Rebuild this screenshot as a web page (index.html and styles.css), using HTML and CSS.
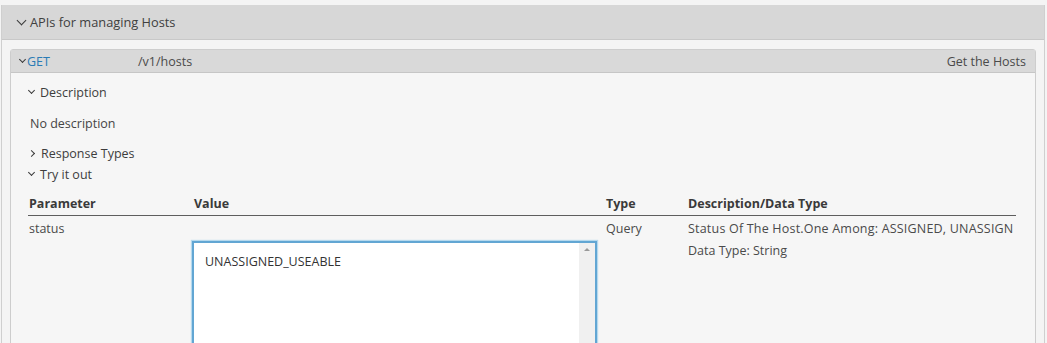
FILE: index.html
```html
<!DOCTYPE html>
<html lang="en">
<head>
    <meta charset="UTF-8">
    <title>APIs for managing Hosts</title>
    <link rel="stylesheet" href="styles.css">
</head>
<body>
    <div class="group">
        <div class="group-header">
            <span class="chev chev-down"></span>APIs for managing Hosts
        </div>

        <div class="op">
            <div class="op-header">
                <span class="chev chev-down small"></span>
                <span class="op-method">GET</span>
                <span class="op-path">/v1/hosts</span>
                <span class="op-summary">Get the Hosts</span>
            </div>

            <div class="op-body">
                <div class="toggle"><span class="chev chev-down small"></span>Description</div>
                <div class="desc-text">No description</div>
                <div class="toggle"><span class="chev chev-right small"></span>Response Types</div>
                <div class="toggle"><span class="chev chev-down small"></span>Try it out</div>

                <table class="params">
                    <thead>
                        <tr>
                            <th class="col-param">Parameter</th>
                            <th class="col-value">Value</th>
                            <th class="col-type">Type</th>
                            <th class="col-desc">Description/Data Type</th>
                        </tr>
                    </thead>
                    <tbody>
                        <tr>
                            <td>status</td>
                            <td class="value-cell">
                                <div class="textarea">
                                    <span>UNASSIGNED_USEABLE</span>
                                    <div class="scroll"><span class="arrow-up"></span></div>
                                </div>
                            </td>
                            <td>Query</td>
                            <td>
                                <div class="clip">Status Of The Host.One Among: ASSIGNED, UNASSIGN</div>
                                <div class="datatype">Data Type: String</div>
                            </td>
                        </tr>
                    </tbody>
                </table>
            </div>
        </div>
    </div>
</body>
</html>
```

FILE: styles.css
```css
* {
    margin: 0;
    padding: 0;
    box-sizing: border-box;
}

body {
    width: 1047px;
    height: 343px;
    overflow: hidden;
    font-family: "Open Sans", Lato, sans-serif;
    font-size: 12.5px;
    color: #454545;
    background: #f4f4f4;
    padding: 5px 2px 0 1px;
}

.group {
    border-left: 1px solid #cfcfcf;
    border-right: 1px solid #cfcfcf;
    height: 400px;
}

.group-header {
    background: #d7d7d7;
    height: 35px;
    display: flex;
    align-items: center;
    padding-left: 16px;
    font-size: 12.8px;
    color: #404040;
    border-bottom: 1px solid #c8c8c8;
}

.chev {
    display: inline-block;
    width: 7px;
    height: 7px;
    border-right: 1.5px solid #3a3a3a;
    border-bottom: 1.5px solid #3a3a3a;
    margin-right: 5px;
}

.chev-down {
    transform: translateY(-2px) rotate(45deg);
}

.chev-right {
    transform: rotate(-45deg);
}

.chev.small {
    width: 5px;
    height: 5px;
    border-width: 1px;
}

.op {
    margin: 9px 8px 0 8px;
    border: 1px solid #cdcdcd;
    border-radius: 3px 3px 0 0;
    height: 340px;
    background: #f6f6f6;
}

.op-header {
    background: #d9d9d9;
    height: 23px;
    display: flex;
    align-items: center;
    padding: 0 9px 0 8px;
    border-bottom: 1px solid #c6c6c6;
}

.op-header .chev {
    margin-right: 2px;
    margin-left: 1px;
}

.op-method {
    color: #2a7bb5;
    width: 111px;
}

.op-path {
    color: #4a4a4a;
}

.op-summary {
    margin-left: auto;
    color: #4a4a4a;
}

.op-body {
    padding: 9px 17px 0 17px;
}

.toggle {
    display: flex;
    align-items: center;
    height: 21px;
    padding-left: 1px;
    color: #3d3d3d;
}

.toggle .chev {
    margin-right: 6px;
}

.toggle .chev-right {
    margin-right: 7px;
}

.desc-text {
    height: 40px;
    display: flex;
    align-items: center;
    padding-left: 2px;
}

.params {
    width: 988px;
    border-collapse: collapse;
    margin-top: 10px;
    table-layout: fixed;
}

.params th {
    text-align: left;
    font-weight: 700;
    color: #3a3a3a;
    height: 20px;
    padding: 0 0 2px 1px;
    border-bottom: 1px solid #5e5e5e;
}

.params td {
    vertical-align: top;
    padding: 4px 0 0 1px;
    color: #4a4a4a;
}

.col-param { width: 165px; }
.col-value { width: 412px; }
.col-type { width: 82px; }
.col-desc { width: 329px; }

.value-cell {
    padding-top: 25px !important;
}

.textarea {
    position: relative;
    width: 405px;
    height: 130px;
    margin-left: -2px;
    background: #ffffff;
    border: 2px solid #62a6d3;
    box-shadow: 0 0 1px 1px #b5d9ee;
    padding: 10px 11px;
    font-size: 12.5px;
    color: #333;
}

.scroll {
    position: absolute;
    top: 0;
    right: 0;
    width: 16px;
    height: 100%;
    background: #f0f0f0;
}

.arrow-up {
    position: absolute;
    top: 5px;
    left: 5px;
    border-left: 3px solid transparent;
    border-right: 3px solid transparent;
    border-bottom: 3px solid #9a9a9a;
}

.clip {
    white-space: nowrap;
    overflow: hidden;
    letter-spacing: 0.2px;
}

.datatype {
    margin-top: 5px;
}
```
